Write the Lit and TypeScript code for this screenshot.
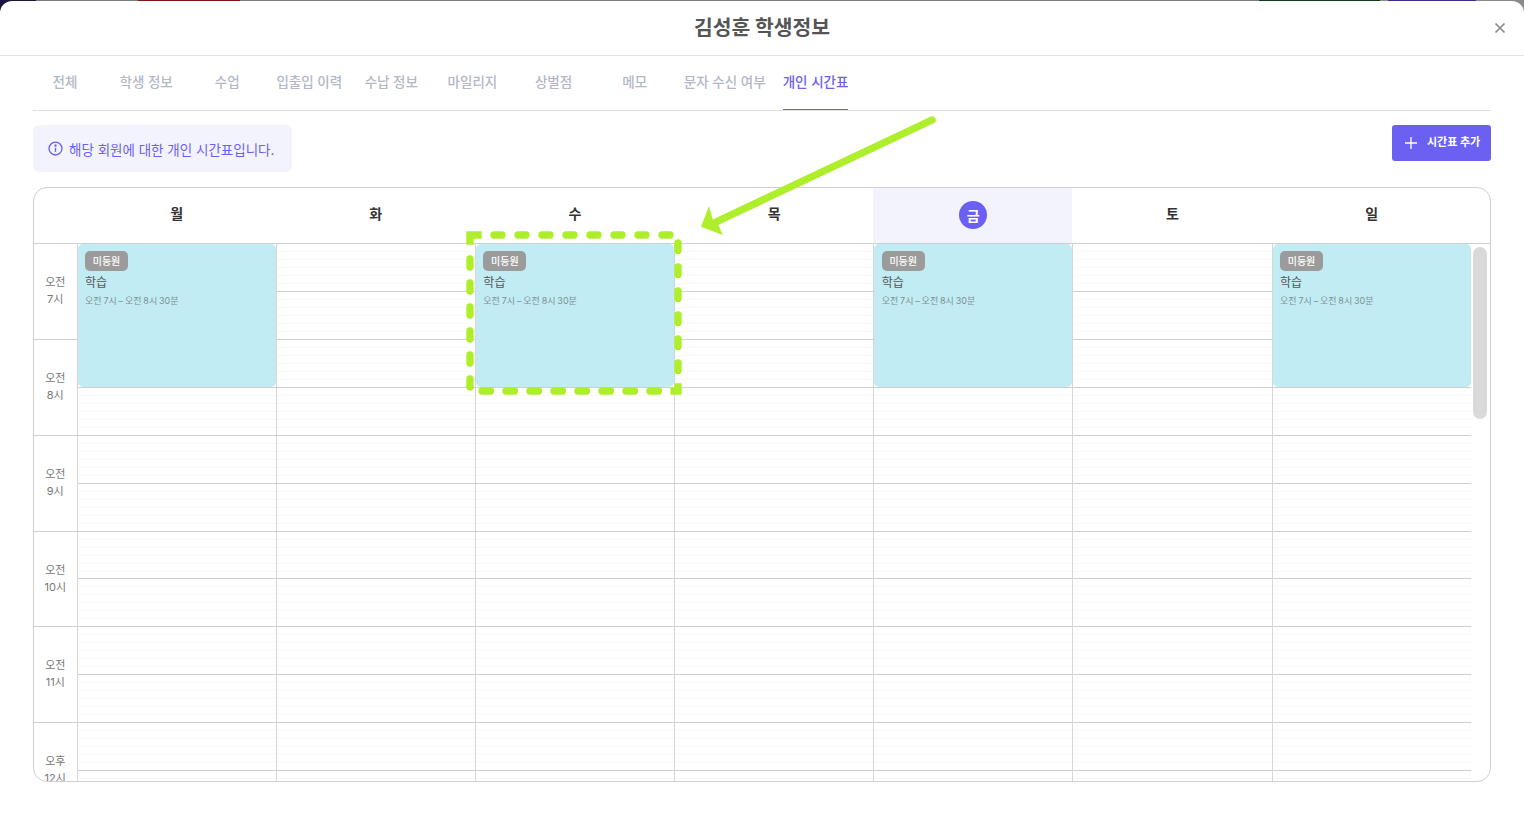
import { LitElement, html, css, svg } from "lit";
import { customElement } from "lit/decorators.js";

const TABS = ["전체", "학생 정보", "수업", "입출입 이력", "수납 정보", "마일리지", "상벌점", "메모", "문자 수신 여부", "개인 시간표"];
const DAYS = ["월", "화", "수", "목", "금", "토", "일"];
const HOURS = [["오전", "7시"], ["오전", "8시"], ["오전", "9시"], ["오전", "10시"], ["오전", "11시"], ["오후", "12시"]];
const EVENT_DAYS = new Set(["월", "수", "금", "일"]);
const SLOTS = Array.from({ length: 14 }, (_, i) => i);

// dashes of the hand-drawn annotation rectangle, as straight pieces
const range = (start: number, n: number, step: number) => Array.from({ length: n }, (_, i) => start + i * step);
const DASH_TOP = range(494, 8, 24);
const DASH_RIGHT = range(243, 6, 24);
const DASH_BOTTOM = range(482, 8, 24);
const DASH_LEFT = range(259, 6, 24);

@customElement("app-root")
export class AppRoot extends LitElement {
  static styles = css`
    :host {
      display: block;
      font-family: "Inter", "Noto Sans CJK KR", "Noto Sans", sans-serif;
    }
    .page {
      position: relative;
      height: 816px;
      box-sizing: border-box;
      padding-top: 1px;
      overflow: hidden;
      background: linear-gradient(
        90deg,
        #1a1540 0 36px,
        #7c7c7c 36px 138px,
        #7a1712 138px 240px,
        #7c7c7c 240px 1259px,
        #0f3d24 1259px 1380px,
        #8a8a8a 1380px 1388px,
        #3a2e8c 1388px 1476px,
        #8a8a8a 1476px 100%
      );
    }
    .modal {
      height: 815px;
      background: #fff;
      border-radius: 12px 12px 0 0;
      display: flex;
      flex-direction: column;
    }
    .title-bar {
      height: 54px;
      flex: none;
      box-sizing: content-box;
      border-bottom: 1px solid #e3e3e3;
      display: flex;
      align-items: center;
      justify-content: center;
      position: relative;
    }
    .title {
      font-size: 20.4px;
      font-weight: 700;
      color: #555;
      line-height: 1;
    }
    .close {
      position: absolute;
      right: 18px;
      top: 21px;
      width: 12px;
      height: 12px;
      display: block;
    }
    .content {
      flex: 1;
      min-height: 0;
      padding: 0 33px;
      display: flex;
      flex-direction: column;
    }
    .tabs {
      height: 54px;
      flex: none;
      border-bottom: 1px solid #e0e0e0;
      display: flex;
      gap: 17.15px;
    }
    .tab {
      min-width: 64px;
      height: 54px;
      box-sizing: border-box;
      padding-bottom: 4px;
      display: flex;
      align-items: center;
      justify-content: center;
      font-size: 13.5px;
      font-weight: 500;
      color: #b3b7c6;
      white-space: nowrap;
    }
    .tab.active {
      color: #6c5ff5;
      border-bottom: 1px solid #6c5ff5;
      padding-bottom: 3px;
    }
    .toolbar {
      flex: none;
      margin-top: 14px;
      display: flex;
      justify-content: space-between;
      align-items: flex-start;
    }
    .info {
      height: 47px;
      box-sizing: border-box;
      padding: 0 18px 0 15px;
      background: #f3f3fe;
      border-radius: 6px;
      display: flex;
      align-items: center;
      gap: 6px;
      font-size: 13.5px;
      color: #6c5ff5;
    }
    .info svg {
      width: 15px;
      height: 15px;
      flex: none;
    }
    .add {
      width: 99px;
      height: 36px;
      background: #6c60f3;
      border-radius: 3px;
      color: #fff;
      font-size: 11px;
      font-weight: 700;
      display: flex;
      align-items: center;
      padding-left: 13px;
      box-sizing: border-box;
      gap: 10px;
      white-space: nowrap;
    }
    .add span {
      margin-bottom: 5px;
    }
    .add svg {
      width: 12px;
      height: 12px;
      flex: none;
    }
    .cal {
      margin-top: 15px;
      width: 1458px;
      height: 595px;
      box-sizing: border-box;
      border: 1px solid #cfcfcf;
      border-radius: 14px;
      overflow: hidden;
      flex: none;
    }
    .cal-head {
      height: 56px;
      box-sizing: border-box;
      border-bottom: 1px solid #cfcfcf;
      display: grid;
      grid-template-columns: 42.5px repeat(7, 199.18px) 1fr;
    }
    .day {
      display: flex;
      align-items: center;
      justify-content: center;
      font-size: 14px;
      font-weight: 700;
      color: #333;
      padding: 0 0 5px 1px;
      box-sizing: border-box;
    }
    .day.today {
      background: #f3f3fe;
      padding-bottom: 0;
    }
    .badge {
      width: 28px;
      height: 28px;
      margin-top: -1px;
      border-radius: 50%;
      background: #6c5ff5;
      color: #fff;
      display: flex;
      align-items: center;
      justify-content: center;
    }
    .cal-body {
      display: grid;
      grid-template-columns: 42.5px repeat(7, 199.18px) 1fr;
      height: 537px;
      overflow: hidden;
    }
    .axis {
      display: flex;
      flex-direction: column;
    }
    .hour {
      height: 95.86px;
      flex: none;
      box-sizing: border-box;
      border-bottom: 1px solid #cfcfcf;
      padding-bottom: 1px;
      display: flex;
      flex-direction: column;
      align-items: center;
      justify-content: center;
      font-size: 11px;
      line-height: 17px;
      color: #777;
    }
    .col {
      position: relative;
      border-left: 1px solid #d6d6d6;
    }
    .slot {
      height: 47.93px;
      box-sizing: border-box;
      border-bottom: 1px solid #cfcfcf;
      background: repeating-linear-gradient(180deg, transparent 0 7px, #f8f8f8 7px 8px);
    }
    .event {
      position: absolute;
      top: 0;
      left: 0;
      right: 0;
      height: 143px;
      background: #c1ecf3;
      border-radius: 5px;
      padding: 7px 7px 7px 7.5px;
      box-sizing: border-box;
    }
    .pill {
      display: flex;
      align-items: center;
      justify-content: center;
      width: 43px;
      height: 20px;
      box-sizing: border-box;
      padding-bottom: 2px;
      background: #9b9b9b;
      border-radius: 5px;
      color: #fff;
      font-size: 10px;
      font-weight: 500;
    }
    .ev-title {
      font-size: 12px;
      line-height: 16px;
      margin-top: 4px;
      color: #555;
    }
    .ev-time {
      font-size: 9px;
      line-height: 12px;
      margin-top: 4px;
      color: #7f8f94;
      white-space: nowrap;
      word-spacing: -0.7px;
    }
    .scroll {
      padding: 3px 3px 0 2px;
      box-sizing: border-box;
    }
    .thumb {
      height: 172px;
      background: #d9d9d9;
      border-radius: 7px;
    }
    .marks {
      position: absolute;
      inset: 0;
      width: 100%;
      height: 100%;
      pointer-events: none;
    }
  `;

  private marks() {
    const green = "#aeee2a";
    return html`<svg class="marks" viewBox="0 0 1524 816">
      <g fill="none" stroke=${green} stroke-width="7.4" stroke-linecap="round">
        <line x1="932" y1="120" x2="716" y2="222" />
        <path d="M470 241 V235 H478" stroke-linejoin="miter" stroke-linecap="square" />
        ${DASH_TOP.map((x) => svg`<line x1=${x} y1="235" x2=${x + 8} y2="235" />`)}
        ${DASH_RIGHT.map((y) => svg`<line x1="678" y1=${y} x2="678" y2=${y + 7.5} />`)}
        <path d="M678 387 V391 H674" stroke-linejoin="miter" stroke-linecap="square" />
        ${DASH_BOTTOM.map((x) => svg`<line x1=${x} y1="391" x2=${x + 8.5} y2="391" />`)}
        ${DASH_LEFT.map((y) => svg`<line x1="470" y1=${y} x2="470" y2=${y + 8} />`)}
      </g>
      <polygon fill=${green} points="701,226.7 709,206 713,220 718,224 722.7,235" />
    </svg>`;
  }

  render() {
    return html`
      <div class="page">
        <div class="modal">
          <header class="title-bar">
            <span class="title">김성훈 학생정보</span>
            <svg class="close" viewBox="0 0 12 12" fill="none" stroke="#8a8a8a" stroke-width="1.7">
              <path d="M1.5 1.5 L10.5 10.5 M10.5 1.5 L1.5 10.5" />
            </svg>
          </header>
          <div class="content">
            <nav class="tabs">
              ${TABS.map((t, i) => html`<div class="tab ${i === TABS.length - 1 ? "active" : ""}">${t}</div>`)}
            </nav>
            <div class="toolbar">
              <div class="info">
                <svg viewBox="0 0 16 16" fill="none" stroke="#6c5ff5" stroke-width="1.4">
                  <circle cx="8" cy="8" r="6.9" />
                  <path d="M8 7.2 V11.6" />
                  <circle cx="8" cy="4.8" r="0.6" fill="#6c5ff5" />
                </svg>
                <span>해당 회원에 대한 개인 시간표입니다.</span>
              </div>
              <div class="add">
                <svg viewBox="0 0 12 12" fill="none" stroke="#fff" stroke-width="1.3">
                  <path d="M6 0 V12 M0 6 H12" />
                </svg>
                <span>시간표 추가</span>
              </div>
            </div>
            <section class="cal">
              <div class="cal-head">
                <div></div>
                ${DAYS.map((d) =>
                  d === "금"
                    ? html`<div class="day today"><span class="badge">${d}</span></div>`
                    : html`<div class="day">${d}</div>`
                )}
                <div></div>
              </div>
              <div class="cal-body">
                <div class="axis">
                  ${HOURS.map(([a, b]) => html`<div class="hour"><span>${a}</span><span>${b}</span></div>`)}
                </div>
                ${DAYS.map(
                  (d) => html`<div class="col">
                    ${SLOTS.map(() => html`<div class="slot"></div>`)}
                    ${EVENT_DAYS.has(d)
                      ? html`<div class="event">
                          <span class="pill">미등원</span>
                          <div class="ev-title">학습</div>
                          <div class="ev-time">오전 7시 – 오전 8시 30분</div>
                        </div>`
                      : ""}
                  </div>`
                )}
                <div class="scroll"><div class="thumb"></div></div>
              </div>
            </section>
          </div>
        </div>
        ${this.marks()}
      </div>
    `;
  }
}
